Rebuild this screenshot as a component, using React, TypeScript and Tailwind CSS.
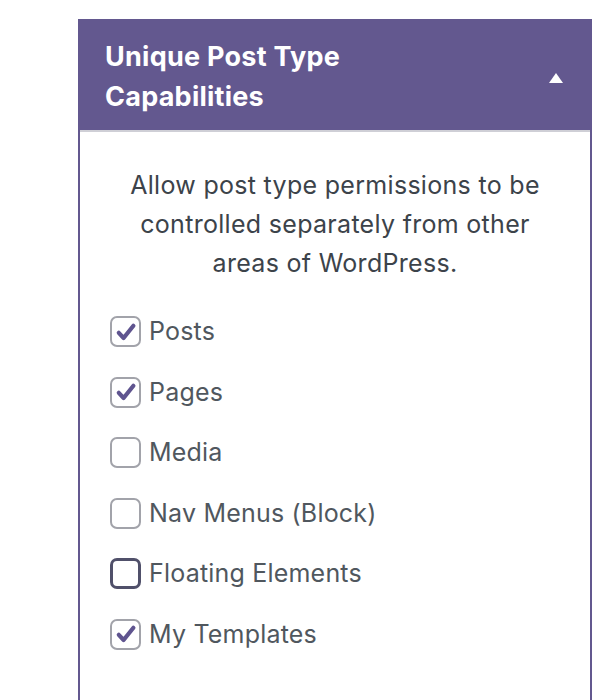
import React, { useState } from 'react';

interface CapItem {
  label: string;
  checked: boolean;
  focused?: boolean;
}

const initialItems: CapItem[] = [
  { label: 'Posts', checked: true },
  { label: 'Pages', checked: true },
  { label: 'Media', checked: false },
  { label: 'Nav Menus (Block)', checked: false },
  { label: 'Floating Elements', checked: false, focused: true },
  { label: 'My Templates', checked: true },
];

const Checkbox: React.FC<{ checked: boolean; focused?: boolean }> = ({ checked, focused }) => (
  <span
    className={`w-[31px] h-[31px] rounded-[7px] bg-white flex items-center justify-center shrink-0 ${
      focused ? 'border-[3px] border-[#50506a]' : 'border-2 border-[#a2a3aa]'
    }`}
  >
    {checked && (
      <svg width="22" height="22" viewBox="0 0 22 22" fill="none">
        <path d="M3.8 11.8 L8.6 17 L18.4 4.8" stroke="#5f548f" strokeWidth="4.2" strokeLinecap="round" strokeLinejoin="round" />
      </svg>
    )}
  </span>
);

export default function App() {
  const [items, setItems] = useState(initialItems);
  const [open, setOpen] = useState(true);

  const toggle = (i: number) =>
    setItems(items.map((it, idx) => (idx === i ? { ...it, checked: !it.checked } : it)));

  return (
    <div className="min-h-[700px] bg-white pt-[19px] pl-[78px] pr-[12px]" style={{ fontFamily: 'Inter, "Noto Sans", sans-serif' }}>
      <div className="w-[514px] min-h-[700px] border-x-2 border-[#63588f] bg-white">
        <div
          className="bg-[#63588f] border-b-2 border-[#cfcfd6] flex items-center justify-between pl-[25px] pr-[26px] pt-[18px] pb-[13px] cursor-pointer"
          onClick={() => setOpen(!open)}
        >
          <h2 className="text-white font-bold text-[27px] leading-[40px] tracking-[0.25px]">
            Unique Post Type
            <br />
            Capabilities
          </h2>
          <svg width="16" height="12" viewBox="0 0 16 12" className="mt-[2px]">
            <path d="M8 1 L15 11 L1 11 Z" fill="#ffffff" />
          </svg>
        </div>
        {open && (
          <div className="pt-[34px] px-[20px]">
            <p className="text-center text-[25px] leading-[39px] tracking-[0.3px] text-[#3c434a]">
              Allow post type permissions to be
              <br />
              controlled separately from other
              <br />
              areas of WordPress.
            </p>
            <div className="mt-[33px] px-[10px] flex flex-col gap-[29.5px]">
              {items.map((it, i) => (
                <label key={it.label} className="flex items-center gap-[8px] cursor-pointer" onClick={() => toggle(i)}>
                  <Checkbox checked={it.checked} focused={it.focused} />
                  <span className="text-[25px] leading-[31px] tracking-[0.2px] text-[#50575e]">{it.label}</span>
                </label>
              ))}
            </div>
          </div>
        )}
      </div>
    </div>
  );
}
